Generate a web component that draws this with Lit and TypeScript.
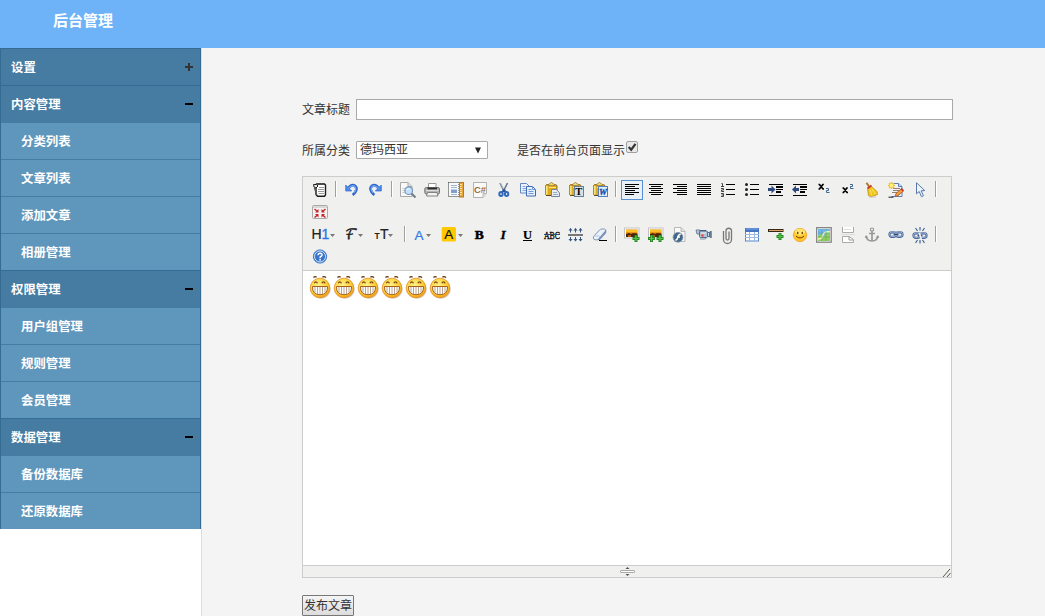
import { LitElement, html, svg, css } from "lit";
import { customElement, property } from "lit/decorators.js";

const sq = (x: number, y: number, w: number, h: number, c = "#000") =>
  svg`<rect x=${x} y=${y} width=${w} height=${h} fill=${c} shape-rendering="crispEdges"></rect>`;

const bars = (rows: [number, number][]) => rows.map(([x, w], i) => sq(x, 2 + i * 2, w, 1));

const clipboard = svg`
  <path d="M1.500 3.500l1-1h9l1.500 1v9l-1 1h-9.500l-1-1z" fill="#dba922" stroke="#8a6a1e" stroke-width=".9"></path>
  <path d="M2.700 4v8.500" stroke="#f8e684" stroke-width="1.800"></path>
  <path d="M4 3.500h7l-1.300-1.700H8.800C8.300 0 6.500 0 6.100 1.800H5.200z" fill="#f5dc78" stroke="#a18032" stroke-width=".8"></path>
  <path d="M5 5.500h7" stroke="#ffe86b" stroke-width="1"></path>
  <path d="M2 13.500h6" stroke="#5c4820" stroke-width="1"></path>`;

const plus = (x: number, y: number) => svg`
  <path d="M${x} ${y - 3.500}v7M${x - 3.500} ${y}h7" stroke="#2a8526" stroke-width="3"></path>
  <path d="M${x} ${y - 2.700}v5.400M${x - 2.700} ${y}h5.400" stroke="#53c746" stroke-width="1.200"></path>`;

const photo = svg`
  <rect x=".5" y="1" width="14.500" height="10" fill="#fff" stroke="#c3c3c3"></rect>
  <rect x="2" y="2.500" width="11.500" height="7.500" fill="#e9890c"></rect>
  <path d="M2 4h11.500" stroke="#ffc126" stroke-width="2.400"></path>
  <path d="M2 7l3-1 2 1 2-1 4.500 .5V10H2z" fill="#49280d"></path>
  <path d="M4 8h3v2H4z" fill="#b35c0b"></path>`;

const chain = svg`
  <g fill="none" stroke="#405f94" stroke-width="2.200">
    <rect x="1.500" y="5.300" width="6.500" height="4.500" rx="2.200"></rect>
    <rect x="8" y="5.300" width="6.500" height="4.500" rx="2.200"></rect>
  </g>
  <g fill="none" stroke="#b5c7e2" stroke-width=".8">
    <rect x="1.500" y="5.100" width="6.500" height="4.500" rx="2.200"></rect>
    <rect x="8" y="5.100" width="6.500" height="4.500" rx="2.200"></rect>
  </g>
  <path d="M5.500 7.500h5" stroke="#314f80" stroke-width="1.300"></path>`;

const caret = (x: number) => svg`<path d="M${x} 7h5l-2.500 3z" fill="#777"></path>`;

const icons: Record<string, unknown> = {
  source: svg`
    <path d="M4.500 2h8l1 1v10l-1 1.300h-7L4 12.500V6z" fill="#fff" stroke="#1c1c1c" stroke-width="1.400"></path>
    <path d="M1.500 2.500h3L6 4l-2 2-2-1z" fill="#e8e8e8" stroke="#222"></path>
    <path d="M2.300 5.500l2.500 7.500" stroke="#555" stroke-width="1.200"></path>
    <path d="M7 1v2M9 1v2M11 1v2" stroke="#444"></path>
    <path d="M7 5.500h5M6 7.500H12M6 9.500H12M6.500 11.500H12" stroke="#999"></path>`,
  undo: svg`
    <path d="M4.200 6.500C6 3.200 9 2.300 11 3.800c2.600 2 1.600 6.200-2.300 9.200" fill="none" stroke="#2e66c9" stroke-width="2.800"></path>
    <path d="M1.700 3v6h6z" fill="#4c8af0" stroke="#3069cc" stroke-width=".7"></path>
    <path d="M4.500 6.500C6.500 3.500 9.500 3 11 4.800c1.300 1.800.6 4-1.200 6" fill="none" stroke="#73a8f5" stroke-width="1.300"></path>`,
  redo: svg`
    <path d="M10.800 6.500C9 3.200 6 2.300 4 3.800c-2.600 2-1.600 6.200 2.300 9.200" fill="none" stroke="#2e66c9" stroke-width="2.800"></path>
    <path d="M13.300 3v6h-6z" fill="#4c8af0" stroke="#3069cc" stroke-width=".7"></path>
    <path d="M10.500 6.500C8 3.500 5.500 3 4 4.800c-1.300 1.800-.6 4 1.200 6" fill="none" stroke="#73a8f5" stroke-width="1.300"></path>`,
  preview: svg`
    <path d="M.5.500h7.500l4 4v10H.5z" fill="#f8f8f8" stroke="#a8a8a8"></path>
    <path d="M8 .5v4h4" fill="#ddd" stroke="#aaa"></path>
    <path d="M2.500 6.500h4M2.500 8.500h3M2.500 10.500h3" stroke="#ccc"></path>
    <path d="M11.500 11.500l4 4" stroke="#747a84" stroke-width="2"></path>
    <circle cx="8.700" cy="8.700" r="3.800" fill="#c6e0fa" stroke="#7295c3" stroke-width="1.200"></circle>
    <path d="M7 8c.5-1.200 1.500-1.500 2.500-1.300" fill="none" stroke="#fff"></path>`,
  print: svg`
    <path d="M4.500 5.500v-4h7.500v4" fill="#fff" stroke="#999"></path>
    <rect x=".8" y="5.500" width="14.700" height="6.500" rx="1.500" fill="#b5b5b5" stroke="#666" stroke-width=".9"></rect>
    <path d="M3.500 6.500h9.500" stroke="#2b2b2b" stroke-width="1.800"></path>
    <path d="M2 8.500h12.500" stroke="#ddd"></path>
    <path d="M3.500 10.500h9.500l1 3.500h-11.500z" fill="#f4f4f4" stroke="#777" stroke-width=".9"></path>`,
  template: svg`
    <rect x=".5" y=".5" width="10.500" height="14" fill="#f7f9fc" stroke="#333" stroke-dasharray="1 1"></rect>
    <path d="M3 3.500h6M3 5.500h6M3 12.500h6" stroke="#a5b4c8"></path>
    <rect x="3" y="7.500" width="6" height="3.500" fill="#7fa0cd"></rect>
    <rect x="11.500" y=".5" width="4" height="14.500" fill="#e8a63b" stroke="#b87921"></rect>
    <path d="M12 2.500h2M12 4.500h1.500M12 6.500h2M12 8.500h1.500M12 10.500h2M12 12.500h1.500" stroke="#fce6a8"></path>`,
  code: svg`
    <path d="M1.500.500h13v11l-3.500 4H1.500z" fill="#fafafa" stroke="#b1b1b1"></path>
    <path d="M11 15.500v-4h3.500" fill="#ddd" stroke="#bbb"></path>
    <text x="2" y="11" font-family="Liberation Sans" font-weight="bold" font-size="9" textLength="12" lengthAdjust="spacingAndGlyphs" fill="#9b6b38">C#</text>`,
  cut: svg`
    <path d="M4 1l4.500 9M11.500 1L7 10" stroke="#66788e" stroke-width="1.600"></path>
    <path d="M4.200 1l4 7" stroke="#c8d4e2" stroke-width=".6"></path>
    <path d="M8 7.500l-2 3M8 7.500l2 3" stroke="#2d559f" stroke-width="1.800"></path>
    <ellipse cx="5" cy="12" rx="1.700" ry="2" fill="none" stroke="#3468bd" stroke-width="2"></ellipse>
    <ellipse cx="10.600" cy="12" rx="1.700" ry="2" fill="none" stroke="#3468bd" stroke-width="2"></ellipse>`,
  copy: svg`
    <path d="M.5 1.500h6l3 3v6.500h-9z" fill="#eaf2fd" stroke="#6487c3"></path>
    <path d="M2.500 4.500h3M2.500 6.500h5M2.500 8.500h5" stroke="#80a6dc"></path>
    <path d="M6.500 4.500h6l3 3v6.500h-9z" fill="#e5effd" stroke="#4169ae"></path>
    <path d="M12.500 4.500v3h3M8.500 7.500h3M8.500 9.500h5M8.500 11.500h5" fill="none" stroke="#6f99d6"></path>`,
  paste: svg`${clipboard}<path d="M7.500 7.500h5l3 3.500v3.500h-8z" fill="#e7edf5" stroke="#73859e"></path><path d="M9 10.500h4M9 12.500h5" stroke="#98abc4"></path>`,
  plainpaste: svg`${clipboard}<rect x="6.500" y="4.500" width="9" height="10" fill="#d5e0e9" stroke="#687f94"></rect>
    <text x="7.300" y="13" font-family="Liberation Serif" font-weight="bold" font-size="10.500" fill="#000">T</text>`,
  wordpaste: svg`${clipboard}<rect x="6.500" y="4.500" width="9" height="10" fill="#e5effb" stroke="#537fbd"></rect>
    <text x="7" y="12.500" font-family="Liberation Serif" font-weight="bold" font-style="italic" font-size="9" fill="#174ba1" stroke="#174ba1" stroke-width=".3">W</text>`,
  left: bars([[1, 14], [1, 10], [1, 14], [1, 10], [1, 14], [1, 9]]),
  center: bars([[1, 14], [3, 10], [1, 14], [3, 10], [1, 14], [3, 10]]),
  right: bars([[1, 14], [5, 10], [1, 14], [5, 10], [1, 14], [5, 10]]),
  full: bars([[1, 14], [1, 14], [1, 14], [1, 14], [1, 14], [1, 14]]),
  ol: svg`${sq(6, 2, 9, 1)}${sq(6, 7, 9, 1)}${sq(6, 12, 9, 1)}
    <path d="M1.500 1.500h1v3M1 4.500h3M1 6.500h2.500v1.500H1.500v1.500H4M1 11.500h2.500v3H1M1.500 13h2" fill="none" stroke="#444"></path>`,
  ul: svg`${sq(6, 2, 9, 1)}${sq(6, 7, 9, 1)}${sq(6, 12, 9, 1)}
    ${[2.500, 7.500, 12.500].map((y) => svg`<circle cx="2.500" cy=${y} r="1.500" fill="#222"></circle>`)}`,
  indent: svg`${sq(1, 2, 14, 1)}${sq(8, 4, 7, 2)}${sq(8, 7, 7, 1)}${sq(8, 9, 5, 2)}${sq(1, 13, 14, 1)}
    <path d="M0 6h3.500V3.500L7.500 7.500l-4 4V9H0z" fill="#2d487b"></path>`,
  outdent: svg`${sq(1, 2, 14, 1)}${sq(8, 4, 7, 2)}${sq(8, 7, 7, 1)}${sq(8, 9, 5, 2)}${sq(1, 13, 14, 1)}
    <path d="M7 6H4V3.500L0 7.500l4 4V9h3z" fill="#2d487b"></path>`,
  sub: svg`<path d="M2.500 2.500h1l3.500 4.500h1M7.800 2.500h-1L3.500 7h-1" fill="none" stroke="#000" stroke-width="1.700"></path>
    <path d="M10 6.500h2.500v2H10.500v2h3" fill="none" stroke="#426891"></path>`,
  sup: svg`<path d="M2.500 6h1l3.500 4.500h1M7.800 6h-1L3.500 10.500h-1" fill="none" stroke="#000" stroke-width="1.700"></path>
    <path d="M10 2.500h2.500v2H10.500v2h3" fill="none" stroke="#426891"></path>`,
  clear: svg`
    <path d="M2.500.800l3.300 5" stroke="#b57724" stroke-width="2"></path>
    <path d="M3.500 6.500l3.500-2.500 6 5.500.500 3-6.500 2.300-2.500-1z" fill="#f0c51c" stroke="#c59516" stroke-width=".8"></path>
    <path d="M3.500 6.500l4-3" stroke="#c63a2f" stroke-width="1.800"></path>
    <path d="M6 8l2 5M8 7l3.500 5" stroke="#fbe96a"></path>
    <path d="M5 15h7" stroke="#c4c4c4"></path>`,
  quickformat: svg`
    <path d="M4.500 1.500h6l3.500 3v10H3.500" fill="#eef3fc" stroke="#5e7caf"></path>
    <path d="M10.500 1.500v3H14" fill="#d0dced" stroke="#5e7caf"></path>
    <path d="M5 6.500h7M5 8.500h6M4 10.500h5" stroke="#a07d64"></path>
    <path d="M3.500 0v7M0 3.500h7M1 1l5 5M6 1L1 6" stroke="#f2c12f" stroke-width="1.500"></path>
    <circle cx="3.500" cy="3.500" r="1.700" fill="#fff48a"></circle>
    <path d="M7 14.500l1-3 5-4.500 2.300 2.200-5.300 4.500z" fill="#f0a037" stroke="#9d542e" stroke-width=".8"></path>
    <path d="M13 6.500l2.500 2.300" stroke="#cc342b" stroke-width="1.700"></path>
    <path d="M.5 15.200h5" stroke="#222" stroke-width="1"></path>`,
  selectall: svg`<path d="M4.500.800v11l2.700-2.300 2.300 5.200 2-1-2.400-4.900 3.700-.2z" fill="#edf4fb" stroke="#5679a9"></path>`,
  fullscreen: svg`
    <rect x=".5" y="1.500" width="15" height="13" rx="1" fill="#f6f3f3" stroke="#a9a9a9"></rect>
    <path d="M1 3h14" stroke="#d7d7d7" stroke-width="2"></path>
    <path d="M2.500 5l3 2.500M13.500 5l-3 2.500M2.500 13.500l3-2.500M13.500 13.500l-3-2.500" stroke="#c52429" stroke-width="1.500"></path>
    <path d="M6.500 5v3.500H3zM9.500 5v3.500H13zM6.500 13.500V10H3zM9.500 13.500V10H13z" fill="#c52429"></path>`,
  heading: svg`<text x="-.5" y="12" font-family="Liberation Sans" font-size="14" fill="#222" stroke="#222" stroke-width=".2">H</text>
    <text x="9.500" y="12" font-family="Liberation Sans" font-size="14" fill="#2675ea" stroke="#2675ea" stroke-width=".3">1</text>${caret(18)}`,
  fontname: svg`<text x="0" y="12" font-family="DejaVu Math TeX Gyre, DejaVu Serif, DejaVu Sans" font-size="14" fill="#222" stroke="#222" stroke-width=".5">ℱ</text>${caret(13)}`,
  fontsize: svg`<text x=".5" y="12" font-family="Liberation Sans" font-weight="bold" font-size="8.500" fill="#222">T</text>
    <text x="6" y="12" font-family="Liberation Sans" font-size="14" fill="#222" stroke="#222" stroke-width=".2">T</text>${caret(14)}`,
  forecolor: svg`<text x="1.500" y="13" font-family="Liberation Sans" font-size="13.500" fill="#3179ea" stroke="#3179ea" stroke-width=".2">A</text>${caret(13)}`,
  hilite: svg`<rect x=".7" y="0" width="14.300" height="14.500" rx="1.500" fill="#ffc900"></rect>
    <text x="3.300" y="12" font-family="Liberation Sans" font-size="13.500" fill="#111" stroke="#111" stroke-width=".2">A</text>${caret(17)}`,
  bold: svg`<text x="2.800" y="12" font-family="Liberation Serif" font-weight="bold" font-size="13.500" stroke="#000" stroke-width=".5">B</text>`,
  italic: svg`<text x="4.500" y="12" font-family="Liberation Serif" font-weight="bold" font-style="italic" font-size="13.500" stroke="#000" stroke-width=".3">I</text>`,
  underline: svg`<text x="3" y="11.500" font-family="Liberation Serif" font-weight="bold" font-size="12.500" stroke="#000" stroke-width=".2">U</text>${sq(3, 13, 9, 1)}`,
  strike: svg`<text x="0" y="11.500" font-family="Liberation Serif" font-size="10.500" textLength="16" lengthAdjust="spacingAndGlyphs" stroke="#000" stroke-width=".3">ABC</text>${sq(0, 7, 16, 1, "#33486c")}`,
  lineheight: svg`${sq(0, 7, 15, 2, "#777")}
    <path d="M2.500 5.500v-4M7.500 5.500v-4M12.500 5.500v-4M2.500 10v4M7.500 10v4M12.500 10v4" stroke="#345681"></path>
    <path d="M.5 3.500l2-2.500 2 2.500zM5.500 3.500l2-2.500 2 2.500zM10.500 3.500l2-2.500 2 2.500zM.5 12l2 2.500 2-2.500zM5.500 12l2 2.500 2-2.500zM10.500 12l2 2.500 2-2.500z" fill="#345681"></path>`,
  removeformat: svg`
    <path d="M1.500 9.500l6-6.500q1-1 2.500-1h2.500q2 .5 1 2.500l-6 7.500-2 .8H3q-2.500-.5-1.500-3.300z" fill="#eaf1fa" stroke="#8397b8"></path>
    <path d="M6 12.500l7.800-9v2.500L8 12.500z" fill="#7c98c2" stroke="#6580ac" stroke-width=".6"></path>
    <path d="M2 9h4.500l1.500 1" fill="none" stroke="#b0c2dd"></path>${sq(7, 13, 8, 1)}`,
  image: svg`${photo}${plus(12, 11.500)}`,
  multi: svg`${photo}${plus(3.500, 11.500)}${plus(12, 11.500)}`,
  flash: svg`
    <path d="M2.500.500h6.500l4 4v10H2.500z" fill="#fafafa" stroke="#b8b8b8"></path>
    <path d="M9 .5v4h4" fill="#ddd" stroke="#bbb"></path>
    <circle cx="6" cy="10.300" r="4.900" fill="#426789" stroke="#8196aa" stroke-width=".8"></circle>
    <path d="M8.800 7.300Q6.500 7.300 6 10T3.500 13.200M5 10h3" fill="none" stroke="#fff" stroke-width="1.400"></path>`,
  media: svg`
    <path d="M0 3h4v4H1z" fill="#b8c5d3" stroke="#627b98" stroke-width=".9"></path>
    <rect x="3.500" y="4" width="8" height="6.500" rx="1" fill="#b1c2d5" stroke="#536d8e"></rect>
    <path d="M4 3.500h6" stroke="#465d78"></path><path d="M5 6h5" stroke="#e8eff6"></path>
    <circle cx="6.500" cy="8.500" r="1.200" fill="#df4836"></circle>
    <path d="M11.500 6l2-1v5l-2-1z" fill="#cfdbe6" stroke="#526c8b"></path>
    <rect x="14" y="4" width="1.800" height="7" fill="#637d9b"></rect>
    <path d="M4 12h5l2-1.500" stroke="#7e8da0" fill="none"></path>`,
  file: svg`<path d="M3.500 4v8.500a3.400 3.400 0 0 0 8 0V3.500a2.800 2.800 0 0 0-5.500 0V11.500a1.500 1.500 0 0 0 3 0V4.500" fill="none" stroke="#777" stroke-width="1.300"></path>`,
  table: svg`
    <rect x="1.500" y="1.500" width="13" height="12.500" fill="#fff" stroke="#5785ca"></rect>
    <rect x="1" y="1" width="14" height="4" fill="#4474c2"></rect>
    <path d="M2 2h12" stroke="#83a8e4"></path>
    <path d="M1 7.500h14M1 10.500h14M5.500 5v9M10.500 5v9" stroke="#9dbbe5"></path>`,
  hr: svg`<rect x="0" y="2" width="15.500" height="3" fill="#352819"></rect><rect x="1" y="3" width="14" height="1" fill="#d9a069"></rect>${plus(12, 9.500)}`,
  emoticon: svg`
    <circle cx="8" cy="8" r="6.700" fill="#ffc725" stroke="#efa12d" stroke-width=".8"></circle>
    <ellipse cx="8" cy="5" rx="5" ry="3.200" fill="#ffe675"></ellipse>
    <ellipse cx="5.700" cy="6" rx=".8" ry="1.300" fill="#79430b"></ellipse><ellipse cx="10.300" cy="6" rx=".8" ry="1.300" fill="#79430b"></ellipse>
    <path d="M4 9.200q4 3.500 8 0" fill="none" stroke="#7b420d" stroke-width="1"></path>`,
  map: svg`
    <rect x=".7" y=".7" width="14.500" height="14.500" fill="#fff" stroke="#828282" stroke-width="1.300"></rect>
    <rect x="2" y="2" width="12" height="12" fill="#8dce5c"></rect>
    <path d="M2 2h12v3q-3-1-4 2T5 7L2 9z" fill="#70b6e8"></path>
    <path d="M2 12q4 0 5-4t7-3" fill="none" stroke="#f3f6bd" stroke-width="1.400"></path>
    <path d="M2 6h12M2 10h12M6 2v12M10 2v12" stroke="#4c8f72" stroke-width=".35"></path>`,
  pagebreak: svg`
    <path d="M2.500 0v5.500h11V0" fill="#fff" stroke="#aaa"></path>
    <path d="M4 2.500h7" stroke="#ddd"></path><path d="M1 7.500h14" stroke="#ddd"></path>
    <path d="M2.500 15.500v-6H9l4.500 3v3z" fill="#fff" stroke="#aaa"></path>
    <path d="M9 9.500v3.500h4" fill="none" stroke="#999"></path>`,
  anchor: svg`
    <circle cx="8" cy="2.600" r="1.600" fill="none" stroke="#999" stroke-width="1.200"></circle>
    <path d="M8 4.200v9.500M5 6.500h6M2 9q.5 4.800 6 5 5.500-.2 6-5" fill="none" stroke="#999" stroke-width="1.700"></path>
    <path d="M.8 11l1.200-3 2.500 2.500zM15.200 11L14 8l-2.500 2.500z" fill="#999"></path>`,
  link: chain,
  unlink: svg`<g transform="translate(0 1)">${chain}</g>
    <path d="M7.300 6l2 6" stroke="#f0f0ee" stroke-width="1.800"></path>
    <path d="M3.500 1l2 3M8 0v3.500M12.500 1l-2 3M3.500 16l2-3M8 16.500V13M12.500 16l-2-3" stroke="#365a8c" stroke-width="1.100"></path>`,
  about: svg`
    <circle cx="8" cy="7.500" r="6.600" fill="#3874cc" stroke="#3f79ca"></circle>
    <circle cx="8" cy="7.500" r="5.500" fill="none" stroke="#d3e5fb" stroke-width="1"></circle>
    <path d="M6 6.200q.2-2 2.100-2 2.100.100 2 1.700Q10 7 8.100 8v1.300" fill="none" stroke="#fff" stroke-width="1.400"></path>
    <rect x="7.300" y="10.100" width="1.600" height="1.500" fill="#fff"></rect>`,
};

const widths: Record<string, number> = { heading: 25, fontname: 21, fontsize: 23, forecolor: 20, hilite: 23 };

const rows = [
  "source | undo redo | preview print template code cut copy paste plainpaste wordpaste | left center right full ol ul indent outdent sub sup clear quickformat selectall | fullscreen",
  "heading fontname fontsize | forecolor hilite bold italic underline strike lineheight removeformat | image multi flash media file table hr emoticon map pagebreak anchor link unlink | about",
].map((r) => r.split(" "));

@customElement("tool-icon")
class ToolIcon extends LitElement {
  @property() name = "";
  static styles = css`
    :host { display: block; height: 16px; }
    svg { display: block; overflow: visible; }
  `;
  render() {
    const w = widths[this.name] ?? 16;
    return html`<svg width=${w} height="16" viewBox="0 0 ${w} 16">${icons[this.name]}</svg>`;
  }
}

@customElement("grin-face")
class GrinFace extends LitElement {
  static styles = css`
    :host, svg { display: block; }
  `;
  render() {
    return html`<svg width="24" height="24" viewBox="0 0 24 24">
      <defs>
        <radialGradient id="skin" cx=".42" cy=".35" r=".72">
          <stop offset="0" stop-color="#fff08a"></stop>
          <stop offset=".6" stop-color="#ffd035"></stop>
          <stop offset="1" stop-color="#ee8f14"></stop>
        </radialGradient>
      </defs>
      <ellipse cx="13" cy="13.500" rx="9.800" ry="9.300" fill="#d6d0c8"></ellipse>
      <ellipse cx="12" cy="12" rx="9.800" ry="9.800" fill="url(#skin)" stroke="#dd8f20" stroke-width=".8"></ellipse>
      <path d="M5.500 1.700Q7-.5 8.500 1.300M14.500 1.300Q16-.5 18 1.700" fill="none" stroke="#70401a" stroke-width="1.300"></path>
      <path d="M6.300 7.300q1.500-2.700 3.200 0M13.800 7.300q1.600-2.700 3.400 0" fill="none" stroke="#713e12" stroke-width="1.200"></path>
      <path d="M4.500 10.500h15q.5 8-7.500 8.200-8-.2-7.500-8.200z" fill="#fff" stroke="#a9611a" stroke-width="1"></path>
      <path d="M7 11v5.500M9.500 11v7M12 11v7.300M14.500 11v7M17 11v5.500" stroke="#9c7e60" stroke-width=".7"></path>
    </svg>`;
  }
}

const menu = [
  { title: "设置", open: false, items: [] as string[] },
  { title: "内容管理", open: true, items: ["分类列表", "文章列表", "添加文章", "相册管理"] },
  { title: "权限管理", open: true, items: ["用户组管理", "规则管理", "会员管理"] },
  { title: "数据管理", open: true, items: ["备份数据库", "还原数据库"] },
];

@customElement("app-root")
class AppRoot extends LitElement {
  static styles = css`
    :host {
      display: flex;
      flex-direction: column;
      height: 616px;
      overflow: hidden;
      font: 12px/18px "Liberation Sans", "Noto Sans CJK SC", sans-serif;
      color: #333;
      background: #f4f4f4;
    }
    * { box-sizing: border-box; }
    header {
      flex: none;
      height: 48px;
      padding: 11px 0 0 53px;
      background: #6eb3f8;
      color: #fff;
      font-size: 15px;
      line-height: 20px;
      font-weight: bold;
    }
    .page { display: flex; flex: 1; min-height: 0; }
    aside { width: 202px; background: #fff; border-right: 1px solid #d0e0e5; }
    .menu { width: 201px; border: solid #346c94; border-width: 0 1px; color: #fff; font-weight: bold; font-size: 12.4px; }
    .head {
      display: flex;
      align-items: flex-start;
      justify-content: space-between;
      height: 37px;
      padding: 0 7px 0 10px;
      border-top: 1px solid #346c94;
      background: #467ca2;
      line-height: 38px;
    }
    .head.open { height: 38px; }
    .head svg { display: block; margin-top: 14px; }
    .item {
      height: 36px;
      padding-left: 20px;
      line-height: 38px;
      background: #5f96bc;
    }
    .item + .item { height: 37px; border-top: 1px solid #467ca2; }
    main { flex: 1; padding: 51px 0 0 100px; }
    .row { display: flex; align-items: center; }
    .title { height: 21px; margin-bottom: 21px; }
    .cat { height: 18px; margin-bottom: 17px; }
    .label { width: 54px; white-space: nowrap; }
    .cat .label, .show { padding-top: 2px; }
    .field { width: 597px; height: 21px; border: 1px solid #a9a9a9; padding: 0 2px; outline: 0; background: #fff; }
    .select {
      display: flex;
      align-items: center;
      justify-content: space-between;
      width: 132px;
      height: 18px;
      padding: 0 5px 0 3px;
      border: 1px solid #a9a9a9;
      border-radius: 1px;
      background: #fff;
      line-height: 18px;
    }
    .show { margin-left: 29px; width: 109px; white-space: nowrap; }
    .check { display: block; margin-bottom: 5px; }
    .editor { width: 650px; border: 1px solid #ccc; background: #fff; }
    .toolbar {
      display: flex;
      flex-direction: column;
      gap: 1px;
      height: 94px;
      padding: 2px 5px;
      background: #f0f0ee;
      border-bottom: 1px solid #ccc;
    }
    .tools { display: flex; flex-wrap: wrap; align-content: flex-start; }
    .tool { margin: 1px; padding: 1px 2px; border: 1px solid transparent; }
    .tool.on { border-color: #5690d2; background: #e9eff6; }
    .sep { width: 2px; height: 16px; margin: 2px 3px; background: #a0a0a0; border-right: 1px solid #fff; }
    .content { display: flex; height: 294px; padding: 5px; }
    .status {
      display: flex;
      justify-content: space-between;
      height: 12px;
      padding-left: 317px;
      border-top: 1px solid #ccc;
      background: #f0f0ee;
    }
    .status svg { display: block; }
    .submit {
      display: block;
      width: 52px;
      height: 21px;
      margin: 17px 0 0;
      padding: 0;
      border: 1px solid #777;
      border-radius: 1px;
      background: linear-gradient(#f5f5f5, #dcdcdc);
      color: #333;
      font: inherit;
      white-space: nowrap;
    }
  `;

  private tool(name: string) {
    if (name === "|") return html`<span class="sep"></span>`;
    return html`<span class="tool ${name === "left" ? "on" : ""}"><tool-icon name=${name}></tool-icon></span>`;
  }

  render() {
    return html`
      <header>后台管理</header>
      <div class="page">
        <aside>
          <div class="menu">
            ${menu.map(
              (g) => html`
                <div class="head ${g.open ? "open" : ""}">
                  <span>${g.title}</span>
                  <svg width="8" height="8">
                    ${sq(0, 3, 8, 2, g.open ? "#000" : "#333")}${g.open ? "" : sq(3, 0, 2, 8, "#333")}
                  </svg>
                </div>
                ${g.items.map((t) => html`<div class="item">${t}</div>`)}
              `
            )}
          </div>
        </aside>
        <main>
          <div class="row title"><span class="label">文章标题</span><input class="field" /></div>
          <div class="row cat">
            <span class="label">所属分类</span>
            <div class="select">
              <span>德玛西亚</span>
              <svg width="8" height="7"><path d="M1 .5h6L4 6.500z" fill="#222"></path></svg>
            </div>
            <span class="show">是否在前台页面显示</span>
            <svg class="check" width="12" height="13">
              <rect x=".5" y=".5" width="11" height="11" rx="1.500" fill="#e8e8e8" stroke="#a0a0a0"></rect>
              <path d="M2.700 6l2.500 2.700L9.500 2.800" fill="none" stroke="#333" stroke-width="2.200"></path>
            </svg>
          </div>
          <div class="editor">
            <div class="toolbar">${rows.map((r) => html`<div class="tools">${r.map((n) => this.tool(n))}</div>`)}</div>
            <div class="content">${Array.from({ length: 6 }, () => html`<grin-face></grin-face>`)}</div>
            <div class="status">
              <svg width="15" height="11">
                <path d="M5.500 3h4l-2-2zM5.500 8h4l-2 2z" fill="#555"></path>
                <rect x=".5" y="4.500" width="14" height="2" rx=".5" fill="#fff" stroke="#aaa"></rect>
              </svg>
              <svg width="9" height="11"><path d="M1 11l7-8M5 11l3.500-4" stroke="#555" fill="none"></path></svg>
            </div>
          </div>
          <button class="submit">发布文章</button>
        </main>
      </div>
    `;
  }
}
